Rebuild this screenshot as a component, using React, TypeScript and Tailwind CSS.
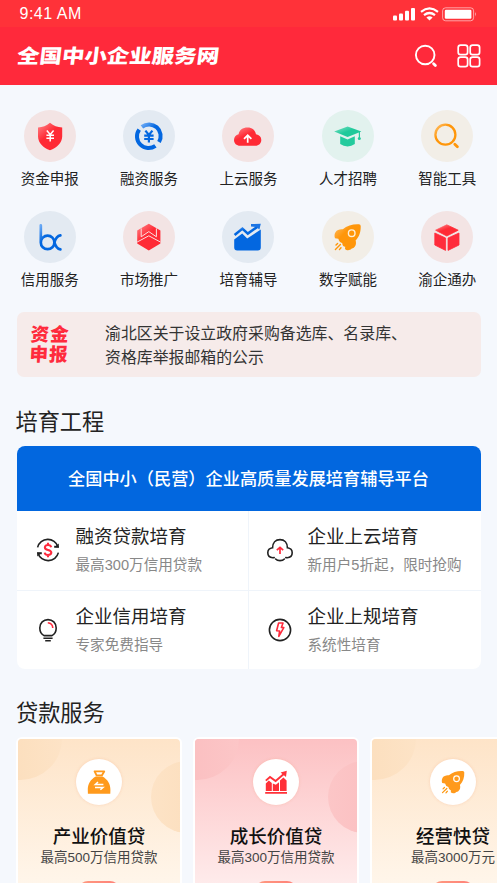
import type { ReactNode } from 'react';

const FONT = "font-['Liberation_Sans','Noto_Sans_CJK_SC',sans-serif]";

function Gradients() {
  return (
    <svg width="0" height="0" className="absolute">
      <defs>
        <linearGradient id="red" x1="0" y1="0" x2="0.6" y2="0.8">
          <stop offset="0" stopColor="#ff8a8d" />
          <stop offset="0.6" stopColor="#ff2a35" />
        </linearGradient>
        <linearGradient id="blue" x1="0" y1="0" x2="0.6" y2="0.7">
          <stop offset="0" stopColor="#6aa9f5" />
          <stop offset="0.6" stopColor="#0367e0" />
        </linearGradient>
        <linearGradient id="green" x1="0" y1="0" x2="0.7" y2="0.7">
          <stop offset="0" stopColor="#84e2c7" />
          <stop offset="0.7" stopColor="#1fc99a" />
        </linearGradient>
        <linearGradient id="orange" x1="0" y1="0" x2="0.6" y2="0.6">
          <stop offset="0" stopColor="#ffc06a" />
          <stop offset="0.6" stopColor="#ff960a" />
        </linearGradient>
      </defs>
    </svg>
  );
}

const rocketBody =
  'M36.6 13.2 Q38.6 13 38.7 15 C38.9 20.5 37.5 25.5 33.6 29.6 C34.8 33 33.2 37.2 29.4 37.8 C28 39.6 24.6 39.8 23 38 L23.2 35.8 Q20.4 35.4 20.2 32 Q17 31.2 16.4 27.8 L13 27.2 C11.4 22 14.5 17.6 20.8 18.2 C25 14.6 31 12.9 36.6 13.2 Z';

function Rocket({ fill, ring }: { fill: string; ring: string }) {
  return (
    <>
      <path d={rocketBody} fill={fill} />
      <circle cx="29.7" cy="22.2" r="3.3" fill="none" stroke={ring} strokeWidth="1.4" />
      <path
        d="M15.6 32.4 L14 34 M18.4 33.6 L13.4 38.4 M19 36.8 L17.4 38.6"
        stroke="#ff960a"
        strokeWidth="1.4"
        strokeLinecap="round"
      />
    </>
  );
}

const services: { label: string; bg: string; icon: ReactNode }[] = [
  {
    label: '资金申报',
    bg: 'bg-[#f3e4e4]',
    icon: (
      <>
        <path d="M26 12.8 C29.5 15.6 33.5 17.4 38.2 17.6 L38.2 26.5 C38 33 33 37.6 26 40.2 C19 37.6 14.2 33 14 26.5 L14 17.6 C18.5 17.4 22.5 15.6 26 12.8 Z" fill="url(#red)" />
        <path d="M22.8 20.6 L26.2 24.6 L29.6 20.6 M26.2 24.6 L26.2 31.6 M22.4 25.3 L30 25.3 M22.4 28.3 L30 28.3" stroke="#fff" strokeWidth="1.5" fill="none" />
      </>
    ),
  },
  {
    label: '融资服务',
    bg: 'bg-[#e3eaf2]',
    icon: (
      <>
        <path d="M18.9 16.9 A11.6 11.6 0 0 1 36 32" stroke="url(#blue)" strokeWidth="4" fill="none" />
        <path d="M16.2 19.6 A11.6 11.6 0 0 0 32.4 35.8" stroke="#0367e0" strokeWidth="4" fill="none" />
        <path d="M22.4 20.6 L25.9 25 L29.4 20.6 M25.9 25 L25.9 32.6 M21.2 25.6 L30.6 25.6 M21.2 29 L30.6 29" stroke="#0367e0" strokeWidth="2.2" fill="none" />
      </>
    ),
  },
  {
    label: '上云服务',
    bg: 'bg-[#f3e4e4]',
    icon: (
      <>
        <path d="M18.2 35.8 C14.5 35.8 12 33.4 12 30 C12 27 13.8 25 16.6 24.3 C17.2 20.3 20.6 17.6 25.6 17.6 C30 17.6 33.2 20.2 34 24.3 C37.4 24.7 39.3 27 39.3 30 C39.3 33.4 36.8 35.8 33.4 35.8 Z" fill="url(#red)" />
        <path d="M25.7 32.8 L25.7 26 M22 28.9 L25.7 25.3 L29.4 28.9" stroke="#fff" strokeWidth="1.7" fill="none" />
      </>
    ),
  },
  {
    label: '人才招聘',
    bg: 'bg-[#e2f2ee]',
    icon: (
      <>
        <path d="M12.2 21.4 L25.6 16.4 L39.4 21.4 L25.6 27 Z" fill="url(#green)" />
        <path d="M18.2 26.2 L25.6 29.6 L32.8 26.2 L32.8 34 Q29.4 36.4 25.6 36.4 Q21.6 36.4 18.2 34 Z" fill="#24cb9d" />
        <path d="M37.4 22 L37.4 28" stroke="#24cb9d" strokeWidth="1.2" />
        <circle cx="37.3" cy="28.4" r="1.5" fill="#24cb9d" />
      </>
    ),
  },
  {
    label: '智能工具',
    bg: 'bg-[#f2eee7]',
    icon: (
      <>
        <circle cx="24.4" cy="24.7" r="10" stroke="url(#orange)" strokeWidth="2.3" fill="none" />
        <path d="M33.8 34.2 L36.4 36.8" stroke="#ff960a" strokeWidth="2.8" strokeLinecap="round" />
      </>
    ),
  },
  {
    label: '信用服务',
    bg: 'bg-[#e3eaf2]',
    icon: (
      <>
        <path d="M16.8 14.4 L16.8 31.4 A6.8 6.8 0 1 0 30.4 31.4 A6.8 6.8 0 1 0 16.8 31.4" stroke="url(#blue)" strokeWidth="2.7" fill="none" strokeLinecap="round" />
        <path d="M36.4 24.4 C33 25 31.4 28 30.4 31.4 C31.4 35 33 37.8 36.4 38.4" stroke="#0367e0" strokeWidth="2.7" fill="none" strokeLinecap="round" />
      </>
    ),
  },
  {
    label: '市场推广',
    bg: 'bg-[#f3e4e4]',
    icon: (
      <>
        <path d="M25.8 12.8 L37.4 19.4 L37.4 32.6 L25.8 39.4 L14.2 32.6 L14.2 19.4 Z" fill="url(#red)" />
        <path d="M14.2 31 L25.8 24.8 L37.4 31 M18.2 17.4 L18.2 25.8 L25.8 20.6 L33.4 25.8 L33.4 17.4" stroke="#fbe0e0" strokeWidth="1" fill="none" />
      </>
    ),
  },
  {
    label: '培育辅导',
    bg: 'bg-[#e3eaf2]',
    icon: (
      <>
        <path d="M12.2 28.6 L20.2 22.4 L25.2 27.6 L38.8 18.6 L38.8 36.6 Q38.8 39.6 35.8 39.6 L15.2 39.6 Q12.2 39.6 12.2 36.6 Z" fill="#0367e0" />
        <path d="M12.6 24 L20.4 17.6 L25.8 22.6 L35.6 15.6" stroke="url(#blue)" strokeWidth="2.6" fill="none" />
        <path d="M29 13 L38.8 12.8 L37.4 18.4 L34.4 16 L29 15.6 Z" fill="#1c75e4" />
      </>
    ),
  },
  { label: '数字赋能', bg: 'bg-[#f2eee7]', icon: <Rocket fill="url(#orange)" ring="#fff0d8" /> },
  {
    label: '渝企通办',
    bg: 'bg-[#f3e4e4]',
    icon: (
      <>
        <path d="M25.8 13.8 L37.2 19.2 L25.8 25 L14.6 19.2 Z" fill="url(#red)" stroke="url(#red)" strokeWidth="0.8" strokeLinejoin="round" />
        <path d="M13.8 22 L24.6 27 L24.6 39.4 L13.8 34 Z M38 22 L27 27 L27 39.4 L38 34 Z" fill="#ff2b3b" stroke="#ff2b3b" strokeWidth="0.8" strokeLinejoin="round" />
      </>
    ),
  },
];

const programs: { title: string; sub: string; icon: ReactNode }[] = [
  {
    title: '融资贷款培育',
    sub: '最高300万信用贷款',
    icon: (
      <>
        <path d="M3.6 11.4 A10.6 10.6 0 0 1 24 10.8 L20.2 10.6 M24.4 16.6 A10.6 10.6 0 0 1 4 17.2 L7.8 17.4" stroke="#222" strokeWidth="1.6" fill="none" />
        <path d="M24.8 7.4 L24.8 11.6 L20 11.4 Z M3.2 20.6 L3.2 16.4 L8 16.6 Z" fill="#222" />
        <path d="M17.2 11.2 C16.8 9.6 15.6 9 14 9 C12.2 9 10.9 9.9 10.9 11.4 C10.9 14.9 17.3 13 17.3 16.6 C17.3 18.1 16 19 14 19 C12.2 19 11 18.2 10.7 16.6 M14 6.8 L14 9 M14 19 L14 21.2" stroke="#ff2b3d" strokeWidth="2.1" fill="none" />
      </>
    ),
  },
  {
    title: '企业上云培育',
    sub: '新用户5折起，限时抢购',
    icon: (
      <>
        <path d="M8.2 21.6 L6.8 21.8 C3.8 21.6 1.8 19.6 1.8 16.8 C1.8 14.2 3.6 12.2 6.6 11.8 C6.6 6.6 9.6 3.6 14 3.6 C18.4 3.6 21.4 6.6 21.4 11.8 C24.4 12.2 26.2 14.2 26.2 16.8 C26.2 19.6 24.2 21.6 21.2 21.8 L19.8 21.6 M9.6 23 C11.6 25.2 16.4 25.2 18.4 23" stroke="#222" strokeWidth="1.6" fill="none" strokeLinecap="round" />
        <path d="M14 18 L14 11.8 M10.8 14.2 L14 11.4 L17.2 14.2" stroke="#ff2b3d" strokeWidth="1.7" fill="none" />
      </>
    ),
  },
  {
    title: '企业信用培育',
    sub: '专家免费指导',
    icon: (
      <>
        <path d="M10 19.6 C7.4 18.2 5.8 15.4 5.8 12 C5.8 7 9.4 3.6 14 3.6 C18.6 3.6 22.2 7 22.2 12 C22.2 15.4 20.6 18.2 18 19.6 Z" stroke="#222" strokeWidth="1.6" fill="none" strokeLinejoin="round" />
        <path d="M9.4 22.2 L18.6 22.2 M11.2 24.8 L16.8 24.8" stroke="#222" strokeWidth="1.6" />
        <path d="M13.8 6.8 C16.8 7 18.6 9 18.8 12" stroke="#ff2b3d" strokeWidth="1.6" fill="none" />
      </>
    ),
  },
  {
    title: '企业上规培育',
    sub: '系统性培育',
    icon: (
      <>
        <circle cx="14" cy="14" r="10.6" stroke="#222" strokeWidth="1.6" fill="none" />
        <path d="M12.6 7 L17 7 L15.4 11.4 L17.8 11.6 L12.8 20.4 L13.6 15 L10.6 14.8 Z" stroke="#ff2b3d" strokeWidth="1.6" fill="none" strokeLinejoin="round" />
      </>
    ),
  },
];

const loans: { title: string; sub: string; card: string; bubble: string; icon: ReactNode }[] = [
  {
    title: '产业价值贷',
    sub: '最高500万信用贷款',
    card: 'from-[#fee4c8] to-[#fff6eb]',
    bubble: 'from-[#fde3c6] to-[#fbdcb8]',
    icon: (
      <>
        <path d="M18.6 12.4 L28.2 12.4 L25.8 16.4 L20.6 16.4 Z" stroke="#ff9a1c" strokeWidth="1.9" fill="none" strokeLinejoin="round" />
        <path d="M19.8 17.4 L26.4 17.4 C31.4 20 34.6 25 34.4 31 L34.3 34.8 L11.9 34.8 L11.8 31 C11.6 25 14.8 20 19.8 17.4 Z" fill="#ff9a1c" />
        <path d="M27.4 25.4 L19.4 25.4 L22 23 M19 28.4 L27 28.4 L24.4 30.8" stroke="#fff" strokeWidth="1.5" fill="none" />
      </>
    ),
  },
  {
    title: '成长价值贷',
    sub: '最高300万信用贷款',
    card: 'from-[#fcc1c3] to-[#feecec]',
    bubble: 'from-[#fcc6c7] to-[#fabbbd]',
    icon: (
      <>
        <path d="M12.8 32 L12.8 24.4 L15.8 21.6 L18.8 24 L18.8 32 Z M19.8 32 L19.8 24.6 L22.8 25.8 L26 23.2 L26 32 Z M27 32 L27 21.4 L30.4 18.4 L33.6 21.4 L33.6 32 Z M12.2 33 L34 33 L34 34.8 L12.2 34.8 Z" fill="#ff3038" />
        <path d="M12.8 21.6 L17 18 L22.6 22 L31.4 14.6" stroke="#ff3038" strokeWidth="1.9" fill="none" />
        <path d="M27.6 13.6 L33.8 11.8 L33 18 Z" fill="#ff3038" />
      </>
    ),
  },
  {
    title: '经营快贷',
    sub: '最高3000万元',
    card: 'from-[#fee4c8] to-[#fff6eb]',
    bubble: 'from-[#fde3c6] to-[#fbdcb8]',
    icon: (
      <g transform="translate(1 0.6) scale(0.86)">
        <Rocket fill="#ff9a1c" ring="#fff" />
      </g>
    ),
  },
];

function StatusBar() {
  return (
    <div className="flex h-[27px] items-center justify-between bg-[#ff3239] pl-[19.5px] pr-4">
      <span className="pt-px font-['Liberation_Sans',sans-serif] text-[16px] tracking-[0.5px] leading-[26px] text-white">9:41 AM</span>
      <svg width="90" height="16" viewBox="0 0 90 16" fill="#fff">
        <rect x="2" y="9.4" width="4" height="5" rx="1" />
        <rect x="8" y="7.4" width="4" height="7" rx="1" />
        <rect x="14" y="4.8" width="4" height="9.6" rx="1" />
        <rect x="20" y="2" width="4" height="12.4" rx="1" />
        <g fill="none" stroke="#fff" strokeWidth="2.2">
          <path d="M30 5.8 Q38.5 -1 47 5.8" />
          <path d="M33 9.2 Q38.5 4.8 44 9.2" />
        </g>
        <path d="M35.4 11.4 Q38.5 9 41.6 11.4 L38.5 14.4 Z" />
        <rect x="51.6" y="1.8" width="31" height="13" rx="3" fill="none" stroke="#fff" strokeOpacity="0.55" />
        <rect x="53.8" y="3.8" width="26.6" height="9" rx="1.2" />
        <path d="M84.2 6 Q86 8.2 84.2 10.4 Z" opacity="0.7" />
      </svg>
    </div>
  );
}

export default function App() {
  return (
    <div className={`flex h-[883px] w-[497px] flex-col overflow-hidden bg-[#f5f8fd] text-[#222] ${FONT}`}>
      <Gradients />
      <StatusBar />
      <header className="flex h-[58px] shrink-0 items-center justify-between bg-[#ff293b] pl-[17px] pr-4">
        <h1 className="origin-left -skew-x-6 scale-x-[1.16] whitespace-nowrap text-[19.4px] font-black leading-[58px] text-white">
          全国中小企业服务网
        </h1>
        <div className="flex items-center gap-[19px]">
          <svg width="24" height="24" viewBox="0 0 24 24" fill="none" stroke="#fff">
            <circle cx="11.2" cy="11" r="9.3" strokeWidth="1.9" />
            <path d="M19.6 19.8 L21.4 21.6" strokeWidth="2.8" strokeLinecap="round" />
          </svg>
          <svg width="24" height="24" viewBox="0 0 24 24" fill="none" stroke="#fff" strokeWidth="1.7">
            <rect x="1.2" y="1.2" width="9.4" height="9.4" rx="2.4" />
            <rect x="13.2" y="1.2" width="9.4" height="9.4" rx="2.4" />
            <rect x="1.2" y="13.2" width="9.4" height="9.4" rx="2.4" />
            <rect x="13.2" y="13.2" width="9.4" height="9.4" rx="2.4" />
          </svg>
        </div>
      </header>

      <nav className="grid h-[227px] shrink-0 auto-rows-[101px] grid-cols-5 pt-[25px]">
        {services.map((s) => (
          <div key={s.label} className="flex flex-col items-center">
            <div className={`size-[52px] rounded-full ${s.bg}`}>
              <svg width="52" height="52" viewBox="0 0 52 52" fill="none">
                {s.icon}
              </svg>
            </div>
            <span className="mt-[6px] text-[14.5px] leading-[23px]">{s.label}</span>
          </div>
        ))}
      </nav>

      <section className="ml-[17px] mr-4 flex h-[65px] shrink-0 items-center rounded-[7px] bg-[#f6ebea] pl-[13px]">
        <div className="w-[75px] origin-left -skew-x-3 text-[18.5px] font-black leading-[20px] tracking-[1px] text-[#ff2b3d]">
          资金
          <br />
          申报
        </div>
        <p className="whitespace-nowrap pt-[2px] text-[15.9px] leading-6 text-[#333]">
          渝北区关于设立政府采购备选库、名录库、
          <br />
          资格库举报邮箱的公示
        </p>
      </section>

      <h2 className="mt-[30px] shrink-0 pl-[15.5px] text-[22.2px] leading-8">培育工程</h2>
      <section className="ml-[17px] mr-4 mt-[7px] shrink-0 overflow-hidden rounded-[8px] bg-white">
        <div className="flex h-[65px] items-center justify-center bg-[#0267df] pr-px pt-[2px] text-[17.2px] font-medium text-white">
          全国中小（民营）企业高质量发展培育辅导平台
        </div>
        <div className="grid grid-cols-[231px_1fr] gap-px bg-[#eff4fa]">
          {programs.map((p) => (
            <div key={p.title} className="flex h-[78.5px] items-center gap-[14px] bg-white pl-[16.5px]">
              <svg width="28" height="28" viewBox="0 0 28 28" fill="none" className="shrink-0">
                {p.icon}
              </svg>
              <div className="whitespace-nowrap pt-[2px]">
                <div className="text-[18.5px] leading-7">{p.title}</div>
                <div className="text-[14.6px] leading-7 text-[#888]">{p.sub}</div>
              </div>
            </div>
          ))}
        </div>
      </section>

      <h2 className="mt-[29px] shrink-0 pl-4 text-[22.2px] leading-8">贷款服务</h2>
      <section className="mt-[7px] flex shrink-0 gap-3 pl-4">
        {loans.map((l) => (
          <div
            key={l.title}
            className={`relative flex h-[190px] w-[166px] shrink-0 flex-col items-center overflow-hidden rounded-[6px] border-2 border-white bg-linear-to-b to-[148px] pt-[20px] -mr-px ${l.card}`}
          >
            <div className={`absolute -left-[39px] -top-[42px] size-[83px] rounded-full bg-linear-to-l ${l.bubble}`} />
            <div className={`absolute -right-[43px] top-[22px] size-[72px] rounded-full bg-linear-to-r ${l.bubble}`} />
            <div className="relative size-[46px] rounded-full bg-white shadow-[0_0_3px_rgba(240,140,90,0.25)]">
              <svg width="46" height="46" viewBox="0 0 46 46" fill="none">
                {l.icon}
              </svg>
            </div>
            <div className="relative mt-[18px] whitespace-nowrap text-[18.5px] font-medium leading-7 text-[#111]">{l.title}</div>
            <div className="relative -mt-[1px] whitespace-nowrap text-[13.5px] leading-4 text-[#444]">{l.sub}</div>
            <div className="relative mt-[15px] h-5 w-[42px] shrink-0 rounded-full bg-linear-to-r from-[#ff9a80] to-[#ff8078]" />
          </div>
        ))}
      </section>
    </div>
  );
}
